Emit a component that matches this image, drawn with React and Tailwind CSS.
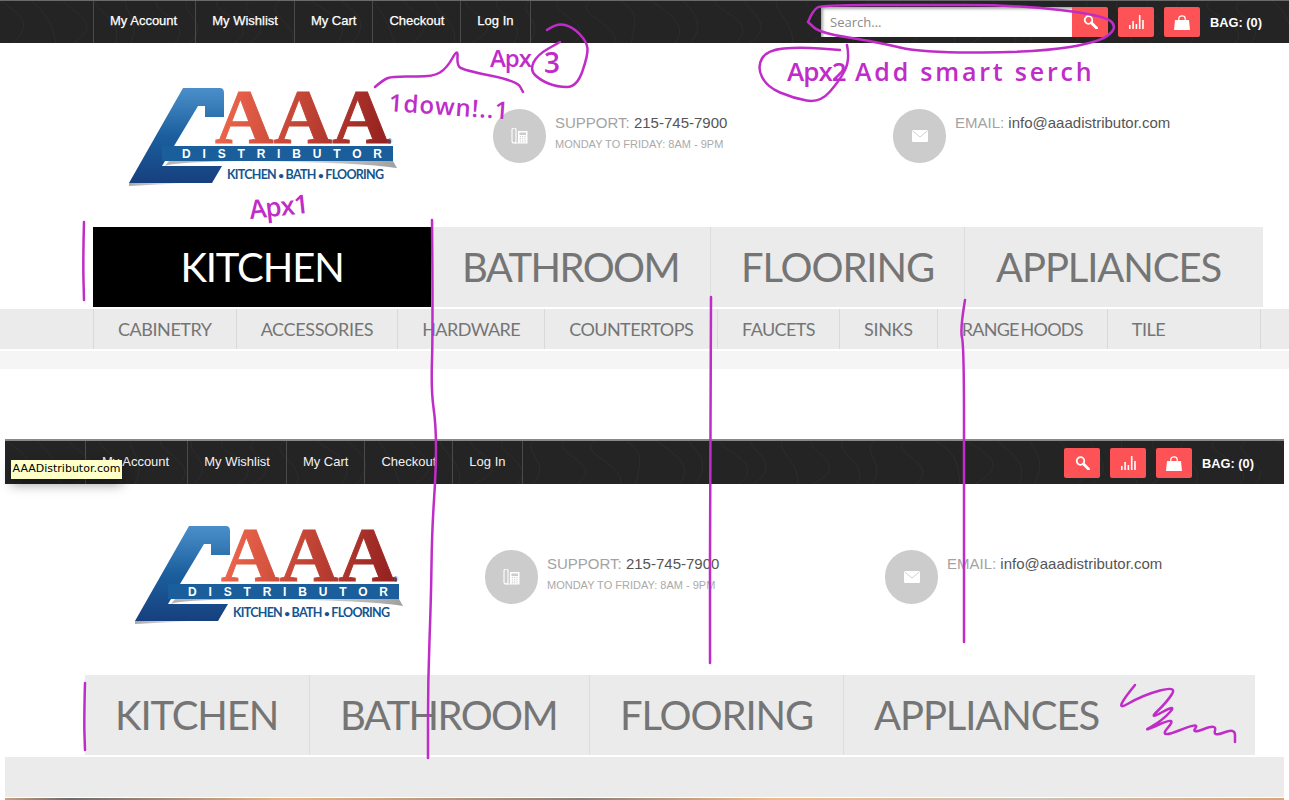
import { useId } from 'react';

const navItems = ['My Account', 'My Wishlist', 'My Cart', 'Checkout', 'Log In'];
const subItems = [
  { label: 'CABINETRY', className: '' },
  { label: 'ACCESSORIES', className: 'tracking-[-0.36px]' },
  { label: 'HARDWARE', className: 'tracking-[-0.55px]' },
  { label: 'COUNTERTOPS', className: 'tracking-[-0.56px]' },
  { label: 'FAUCETS', className: 'tracking-[-0.6px]' },
  { label: 'SINKS', className: 'tracking-[-0.3px]' },
  { label: 'RANGE HOODS', className: '[word-spacing:-2px] tracking-[-0.75px]' },
  { label: 'TILE', className: 'w-[154px]' },
];

// smooth freehand stroke through a list of points
function ink(points) {
  let d = `M${points[0][0]} ${points[0][1]}`;
  for (let i = 1; i < points.length - 1; i++) {
    const mx = (points[i][0] + points[i + 1][0]) / 2;
    const my = (points[i][1] + points[i + 1][1]) / 2;
    d += ` Q${points[i][0]} ${points[i][1]} ${mx} ${my}`;
  }
  const last = points[points.length - 1];
  return `${d} L${last[0]} ${last[1]}`;
}

// faint contour lines of the bar's texture
function Topo() {
  const lines = [];
  for (let i = 0; i < 44; i++) {
    const x = i * 31 - 30;
    const a = ((i * 37) % 41) - 20;
    const b = ((i * 23) % 37) - 18;
    const c = ((i * 13) % 29) - 14;
    lines.push(`M${x} 0 C${x + a} 12 ${x + b + 30} 22 ${x + c + 12} 43`);
  }
  return (
    <svg className="absolute inset-0 w-full h-full" fill="none" stroke="#2d2d2d" strokeWidth="1">
      {lines.map((d, i) => (
        <path key={i} d={d} />
      ))}
    </svg>
  );
}

function SearchIcon() {
  return (
    <svg width="15" height="14" viewBox="0 0 15 14" fill="none" stroke="white">
      <circle cx="5.5" cy="5" r="3.8" strokeWidth="1.8" />
      <path d="M8.5 8 L13.5 13" strokeWidth="2.8" strokeLinecap="round" />
    </svg>
  );
}

function ChartIcon() {
  return (
    <svg width="15" height="14" viewBox="0 0 15 14" fill="white">
      <rect x="0" y="10" width="1.6" height="4" />
      <rect x="3.3" y="6" width="1.6" height="8" />
      <rect x="6.6" y="9" width="1.6" height="5" />
      <rect x="9.9" y="0" width="1.6" height="14" />
      <rect x="13.2" y="5" width="1.6" height="9" />
    </svg>
  );
}

function BagIcon() {
  return (
    <svg width="16" height="15" viewBox="0 0 16 15">
      <path d="M1 5 H15 L16 15 H0 Z" fill="white" />
      <path d="M4.8 6.5 V3.6 C4.8 0 11.2 0 11.2 3.6 V6.5" fill="none" stroke="white" strokeWidth="1.2" />
    </svg>
  );
}

function PhoneIcon() {
  return (
    <svg width="17" height="16" viewBox="0 0 17 16" fill="white">
      <path d="M1 2 a2 2 0 0 1 4 0 V13 a2 2 0 0 1 -4 0 Z" fill="none" stroke="white" strokeWidth="1.1" />
      <path d="M7 3 H16.5 V15.5 H3.5 V14.5 H7 Z" />
      <rect x="8.5" y="4.5" width="6.5" height="2.5" fill="#cccccc" />
      {[0, 1, 2].map((c) =>
        [0, 1, 2, 3].map((r) => <rect key={`${c}${r}`} x={8.8 + c * 2.3} y={8 + r * 1.8} width="1.1" height="1" fill="#cccccc" />)
      )}
    </svg>
  );
}

function MailIcon() {
  return (
    <svg width="16" height="12" viewBox="0 0 16 12">
      <rect width="16" height="12" rx="1" fill="white" />
      <path d="M0.5 0.8 L8 7 L15.5 0.8" fill="none" stroke="#cccccc" strokeWidth="0.9" />
    </svg>
  );
}

function Logo() {
  const id = useId();
  return (
    <svg width="270" height="118" viewBox="0 -16 270 118" className="shrink-0">
      <defs>
        <linearGradient id={`${id}c`} x1="0" y1="0" x2="0" y2="1">
          <stop offset="0" stopColor="#4b8fca" />
          <stop offset="0.5" stopColor="#1b5f9e" />
          <stop offset="1" stopColor="#173f7e" />
        </linearGradient>
        <linearGradient id={`${id}a`} gradientUnits="userSpaceOnUse" x1="85" y1="10" x2="262" y2="50">
          <stop offset="0" stopColor="#f2694f" />
          <stop offset="0.5" stopColor="#c14435" />
          <stop offset="1" stopColor="#92201f" />
        </linearGradient>
        <linearGradient id={`${id}s`} x1="0" y1="0" x2="1" y2="0">
          <stop offset="0" stopColor="#ffffff" />
          <stop offset="1" stopColor="#a0a0a0" />
        </linearGradient>
        <linearGradient id={`${id}f`} x1="0" y1="0" x2="1" y2="0">
          <stop offset="0" stopColor="#a8a8a8" />
          <stop offset="1" stopColor="#ffffff" />
        </linearGradient>
      </defs>
      <path d="M0 95 H60 L0 98 Z" fill={`url(#${id}f)`} />
      <path d="M54 0 H91 Q95 0 95 5 V29 H76 V18 H69 L33 78 H93 L83 95 H0 Z" fill={`url(#${id}c)`} />
      <text
        x="86"
        y="55"
        fontFamily="'Liberation Serif', serif"
        fontWeight="700"
        fontSize="78"
        textLength="176"
        lengthAdjust="spacingAndGlyphs"
        fill={`url(#${id}a)`}
        stroke={`url(#${id}a)`}
        strokeWidth="0.9"
      >
        AAA
      </text>
      <text x="258" y="56" fontFamily="'Liberation Sans', sans-serif" fontSize="7" fill="#1b5f9e">
        ®
      </text>
      <path d="M110 73 H264 L268 80 Q230 74 110 73 Z" fill={`url(#${id}s)`} />
      <path d="M36 78 Q44 74 110 73 L40 73 Z" fill="#b5b5b5" />
      <rect x="33" y="58" width="231" height="15" fill="#1a5f9b" />
      <text x="53" y="70" fontFamily="'Liberation Sans', sans-serif" fontWeight="700" fontSize="12" textLength="200" fill="white">
        DISTRIBUTOR
      </text>
      <text x="98" y="91" fontFamily="Lato, sans-serif" fontWeight="700" fontSize="12.5" textLength="157" fill="#14558f">
        KITCHEN <tspan fontSize="10">•</tspan> BATH <tspan fontSize="10">•</tspan> FLOORING
      </text>
    </svg>
  );
}

function TopBar({ borderClass, navClass, linkClass, right }) {
  return (
    <div className={`relative h-[43px] bg-[#242424] flex items-stretch font-['Liberation_Sans',sans-serif] ${borderClass}`}>
      <Topo />
      <nav className={`relative flex ${navClass}`}>
        {navItems.map((item) => (
          <a key={item} className={`flex items-center pl-4 pr-4 first:pr-[18px] pb-[2px] border-l border-[#4a4a4a] last:border-r text-[13px] ${linkClass}`}>
            {item}
          </a>
        ))}
      </nav>
      <div className="relative ml-auto flex items-start">{right}</div>
    </div>
  );
}

function IconButton({ children, className = '' }) {
  return (
    <button className={`w-9 h-[30px] bg-[#fd5356] rounded-[2px] flex items-center justify-center ${className}`}>{children}</button>
  );
}

function Contact({ widthClass, icon, children }) {
  return (
    <div className={`flex gap-[9px] mt-[66px] font-['Liberation_Sans',sans-serif] ${widthClass}`}>
      <div className="w-[53px] h-[54px] rounded-full bg-[#cccccc] flex items-center justify-center shrink-0">{icon}</div>
      <div className="pt-1">{children}</div>
    </div>
  );
}

function Header({ heightClass, logoClass, phoneGap }) {
  return (
    <div className={`flex items-start bg-white ${heightClass}`}>
      <div className={logoClass}>
        <Logo />
      </div>
      <div className={phoneGap}>
        <Contact widthClass="w-[400px]" icon={<PhoneIcon />}>
          <div className="text-[15px] leading-5 text-[#a3a3a3]">
            SUPPORT: <span className="text-[#555555]">215-745-7900</span>
          </div>
          <div className="text-[11px] leading-[22px] text-[#aaaaaa]">MONDAY TO FRIDAY: 8AM - 9PM</div>
        </Contact>
      </div>
      <Contact icon={<MailIcon />}>
        <div className="text-[15px] leading-5 text-[#a3a3a3]">
          EMAIL: <span className="text-[#555555]">info@aaadistributor.com</span>
        </div>
      </Contact>
    </div>
  );
}

function Shot1() {
  return (
    <div>
      <TopBar
        borderClass="border-t border-[#6a6a6a]"
        navClass="ml-[93px]"
        linkClass="text-white [-webkit-text-stroke:0.25px_white]"
        right={
          <div className="flex items-start gap-[10px] pt-[6px] pr-[27px]">
            <div className="flex">
              <input
                placeholder="Search..."
                className="w-[251px] h-[30px] bg-white pl-[9px] text-[13px] font-['Open_Sans',sans-serif] placeholder:text-[#8a8a8a] shadow-[inset_2px_2px_3px_rgba(0,0,0,0.35)] outline-none"
              />
              <IconButton className="rounded-l-none">
                <SearchIcon />
              </IconButton>
            </div>
            <IconButton>
              <ChartIcon />
            </IconButton>
            <IconButton>
              <BagIcon />
            </IconButton>
            <span className="pt-[6px] text-[12.8px] font-bold text-white">BAG: (0)</span>
          </div>
        }
      />
      <Header heightClass="h-[184px]" logoClass="ml-[129px] mt-[29px] w-[266px]" phoneGap="ml-[98px]" />

      <div className="ml-[93px] w-[1170px] h-20 flex bg-[#ebebeb] font-['Lato',sans-serif] text-[40px] tracking-[-1.1px] text-[#757575]">
        <a className="w-[338px] flex items-center justify-center bg-black text-white">KITCHEN</a>
        <a className="w-[280px] flex items-center justify-center border-r border-[#dddddd] tracking-[-1.6px]">BATHROOM</a>
        <a className="w-[254px] flex items-center justify-center border-r border-[#dddddd]">FLOORING</a>
        <a className="flex-1 flex items-center pl-[31px]">APPLIANCES</a>
      </div>

      <div className="mt-[2px] h-10 pl-[93px] flex bg-[#ebebeb] font-['Lato',sans-serif] text-[18px] tracking-[-0.45px] text-[#757575]">
        {subItems.map((item) => (
          <a key={item.label} className={`flex items-center px-6 whitespace-nowrap border-l border-[#d9d9d9] last:border-r ${item.className}`}>
            {item.label}
          </a>
        ))}
      </div>
      <div className="mt-[2px] h-[18px] bg-[#f5f5f5]" />
      <div className="h-[70px] bg-white" />
    </div>
  );
}

function Shot2() {
  return (
    <div className="mx-[5px]">
      <div className="h-[45px]">
        <TopBar
          borderClass="h-[45px] border-t-2 border-[#888888]"
          navClass="ml-20"
          linkClass="text-[#f2f2f2]"
          right={
            <div className="flex items-start gap-[10px] pt-[7px] pr-[30px]">
              <IconButton>
                <SearchIcon />
              </IconButton>
              <IconButton>
                <ChartIcon />
              </IconButton>
              <IconButton>
                <BagIcon />
              </IconButton>
              <span className="pt-[6px] text-[12.8px] font-bold text-white">BAG: (0)</span>
            </div>
          }
        />
      </div>
      <Header heightClass="h-[191px]" logoClass="ml-[130px] mt-[26px] w-[266px]" phoneGap="ml-[84px]" />

      <div className="ml-20 w-[1170px] h-20 flex bg-[#ebebeb] font-['Lato',sans-serif] text-[40px] tracking-[-1.1px] text-[#757575]">
        <a className="flex items-center px-[30px] border-r border-[#dddddd] w-[225px]">KITCHEN</a>
        <a className="flex items-center px-[30px] border-r border-[#dddddd] w-[280px] tracking-[-1.6px]">BATHROOM</a>
        <a className="flex items-center px-[30px] border-r border-[#dddddd] w-[254px]">FLOORING</a>
        <a className="flex items-center px-[30px] flex-1">APPLIANCES</a>
      </div>
      <div className="mt-[2px] h-10 bg-[#ebebeb]" />
      <div className="mt-[1px] h-[2px] bg-[linear-gradient(90deg,#c7a27e,#6b6b6b_5%,#e8b486_22%,#8a8078_45%,#f0b98a_60%,#c9c2b8_80%,#d9a579)]" />
    </div>
  );
}

const strokes = [
  // rulers pulled down the page
  [[84, 222], [83, 260], [84, 300]],
  [[432, 220], [433, 330], [431, 390], [436, 425], [436, 470], [432, 530], [431, 600], [428, 680], [428, 758]],
  [[711, 297], [710, 450], [710, 663]],
  [[965, 300], [960, 330], [964, 345], [964, 500], [964, 642]],
  [[85, 683], [84, 720], [85, 750]],
  // brace under Checkout / Log In
  [[375, 87], [383, 80], [393, 76], [433, 77], [447, 68], [458, 48], [457, 65], [463, 70], [517, 81], [523, 92]],
  // ring around the 3
  [[547, 30], [557, 23], [573, 27], [587, 42], [588, 55], [577, 87], [557, 87], [540, 80], [530, 70], [537, 55], [560, 42]],
  // ellipse round the search box
  [[808, 22], [813, 10], [822, 5], [917, 5], [1017, 5], [1103, 15], [1118, 27], [1100, 42], [1040, 52], [923, 53], [877, 42], [820, 33], [808, 22]],
  // ring around Apx 2
  [[847, 45], [850, 60], [840, 80], [820, 103], [793, 98], [767, 87], [757, 67], [767, 50], [800, 47], [840, 50]],
  // scratch-out beside APPLIANCES
  [[1135, 685], [1112, 713], [1143, 695], [1177, 686], [1167, 702], [1148, 720], [1177, 704], [1163, 720], [1140, 733], [1178, 716], [1158, 739], [1200, 722], [1191, 734], [1217, 724], [1213, 737], [1235, 728], [1235, 742]],
];

function Annotations() {
  return (
    <>
      <svg className="absolute inset-0 pointer-events-none" width="1289" height="800" fill="none" stroke="#c02cc8" strokeWidth="2.5" strokeLinecap="round" strokeLinejoin="round">
        {strokes.map((pts, i) => (
          <path key={i} d={ink(pts)} />
        ))}
      </svg>
      <div className="absolute inset-0 pointer-events-none font-['Open_Sans',sans-serif] font-semibold text-[#c02cc8]">
        <span className="absolute left-[490px] top-[42px] text-[24px] leading-8 tracking-[-1px]">Apx</span>
        <span className="absolute left-[544px] top-[44px] text-[28px] leading-9">3</span>
        <span className="absolute left-[389px] top-[86px] text-[24px] leading-8 tracking-[1px] rotate-[4deg] origin-left">1down!..1</span>
        <span className="absolute left-[249px] top-[190px] text-[26px] leading-8 tracking-[-1px] -rotate-6">Apx1</span>
        <span className="absolute left-[787px] top-[55px] text-[26px] leading-8 tracking-[-1px]">Apx2</span>
        <span className="absolute left-[855px] top-[55px] text-[25px] leading-8 tracking-[2.8px]">Add smart serch</span>
      </div>
    </>
  );
}

export default function App() {
  return (
    <div className="relative w-[1289px] h-[800px] overflow-hidden bg-white">
      <Shot1 />
      <Shot2 />
      <Annotations />
      {/* browser tooltip from the second capture */}
      <div className="absolute left-[11px] top-[460px] w-[111px] h-[19px] bg-[#ffffc8] flex items-center justify-center text-black text-[11px] font-['DejaVu_Sans',sans-serif] shadow-[0_6px_12px_rgba(0,0,0,0.35)]">
        AAADistributor.com
      </div>
    </div>
  );
}
